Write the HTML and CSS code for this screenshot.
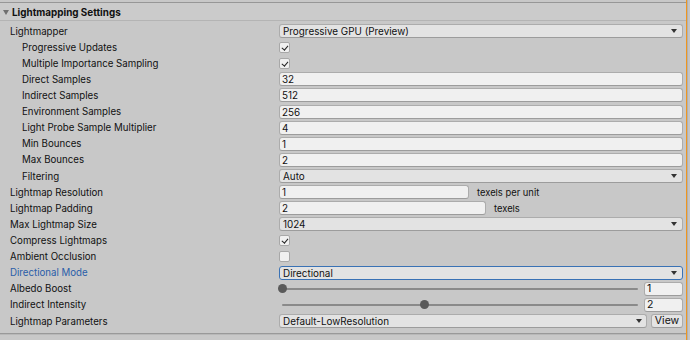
FILE: index.html
```html
<!DOCTYPE html>
<html lang="en">
<head>
    <meta charset="UTF-8">
    <title>Lightmapping Settings</title>
    <link rel="stylesheet" href="styles.css">
</head>
<body>
<div class="window">
    <div class="panel">
        <div class="topline"></div>
        <div class="header">
            <span class="foldout"></span>
            <span class="header-title">Lightmapping Settings</span>
        </div>

        <div class="row">
            <div class="label">Lightmapper</div>
            <div class="value"><div class="dropdown">Progressive GPU (Preview)<span class="arrow"></span></div></div>
        </div>
        <div class="row">
            <div class="label sub">Progressive Updates</div>
            <div class="value"><span class="check on"></span></div>
        </div>
        <div class="row">
            <div class="label sub">Multiple Importance Sampling</div>
            <div class="value"><span class="check on"></span></div>
        </div>
        <div class="row">
            <div class="label sub">Direct Samples</div>
            <div class="value"><div class="field">32</div></div>
        </div>
        <div class="row">
            <div class="label sub">Indirect Samples</div>
            <div class="value"><div class="field">512</div></div>
        </div>
        <div class="row">
            <div class="label sub">Environment Samples</div>
            <div class="value"><div class="field">256</div></div>
        </div>
        <div class="row">
            <div class="label sub">Light Probe Sample Multiplier</div>
            <div class="value"><div class="field">4</div></div>
        </div>
        <div class="row">
            <div class="label sub">Min Bounces</div>
            <div class="value"><div class="field">1</div></div>
        </div>
        <div class="row">
            <div class="label sub">Max Bounces</div>
            <div class="value"><div class="field">2</div></div>
        </div>
        <div class="row">
            <div class="label sub">Filtering</div>
            <div class="value"><div class="dropdown">Auto<span class="arrow"></span></div></div>
        </div>
        <div class="row">
            <div class="label">Lightmap Resolution</div>
            <div class="value">
                <div class="field res">1</div>
                <span class="unit">texels per unit</span>
            </div>
        </div>
        <div class="row">
            <div class="label">Lightmap Padding</div>
            <div class="value">
                <div class="field pad">2</div>
                <span class="unit">texels</span>
            </div>
        </div>
        <div class="row">
            <div class="label">Max Lightmap Size</div>
            <div class="value"><div class="dropdown">1024<span class="arrow"></span></div></div>
        </div>
        <div class="row">
            <div class="label">Compress Lightmaps</div>
            <div class="value"><span class="check on"></span></div>
        </div>
        <div class="row">
            <div class="label">Ambient Occlusion</div>
            <div class="value"><span class="check"></span></div>
        </div>
        <div class="row">
            <div class="label focused">Directional Mode</div>
            <div class="value"><div class="dropdown focus">Directional<span class="arrow"></span></div></div>
        </div>
        <div class="row">
            <div class="label">Albedo Boost</div>
            <div class="value">
                <div class="slider"><div class="knob" style="left: 0%"></div></div>
                <div class="field num">1</div>
            </div>
        </div>
        <div class="row">
            <div class="label">Indirect Intensity</div>
            <div class="value">
                <div class="slider"><div class="knob" style="left: 40%"></div></div>
                <div class="field num">2</div>
            </div>
        </div>
        <div class="row">
            <div class="label">Lightmap Parameters</div>
            <div class="value">
                <div class="dropdown params">Default-LowResolution<span class="arrow"></span></div>
                <div class="button">View</div>
            </div>
        </div>

        <div class="section-line"></div>
        <div class="header next">
            <span class="header-title">Workflow Settings</span>
        </div>
    </div>
    <div class="edge"></div>
</div>
</body>
</html>
```

FILE: styles.css
```css
body {
    margin: 0;
    background-color: #c8c8c8;
    font-family: Inter, "Noto Sans", sans-serif;
    font-size: 9.7px;
    color: #111;
    overflow: hidden;
}
.window {
    display: flex;
    width: 690px;
    height: 340px;
    overflow: hidden;
}
.panel {
    width: 686px;
    border-right: 1px solid #f0961e;
    flex-shrink: 0;
}
.edge {
    flex: 1;
    background-color: #c4c4c4;
    border-left: 1px solid #b0b0b0;
}
.topline {
    height: 2px;
    border-bottom: 1px solid #979797;
}
.header {
    display: flex;
    align-items: center;
    height: 17px;
    border-bottom: 1px solid #b4b4b4;
    background-color: #cbcbcb;
    margin-bottom: 2px;
}
.header-title {
    font-weight: 700;
    font-size: 9.9px;
    padding-left: 2px;
}
.foldout {
    width: 0;
    height: 0;
    margin-left: 3px;
    margin-right: 1px;
    margin-top: 2px;
    border-left: 3.5px solid transparent;
    border-right: 3.5px solid transparent;
    border-top: 5px solid #707070;
}
.row {
    display: flex;
    align-items: center;
    height: 16.12px;
}
.label {
    width: 269px;
    padding-left: 10px;
    white-space: nowrap;
}
.label.sub {
    width: 257px;
    padding-left: 22px;
}
.label.focused {
    color: #2a5ea8;
}
.value {
    flex: 1;
    display: flex;
    align-items: center;
    padding-right: 3px;
    min-width: 0;
}
.field, .dropdown, .button {
    box-sizing: border-box;
    height: 14px;
    line-height: 12px;
    padding: 0 3px;
    border: 1px solid #acacac;
    border-bottom-color: #9c9c9c;
    border-radius: 3px;
    background-color: #f0f0f0;
    white-space: nowrap;
    font-size: 9.9px;
}
.field {
    flex: 1;
    padding-left: 2px;
}
.dropdown {
    flex: 1;
    position: relative;
    background-color: #e3e3e3;
    padding-left: 3px;
}
.dropdown.focus {
    border-color: #3a72b5;
}
.arrow {
    position: absolute;
    right: 5px;
    top: 4px;
    width: 0;
    height: 0;
    border-left: 3.5px solid transparent;
    border-right: 3.5px solid transparent;
    border-top: 4px solid #333;
}
.field.res {
    flex: 0 0 190px;
}
.field.pad {
    flex: 0 0 207px;
}
.unit {
    margin-left: 8px;
    white-space: nowrap;
    font-size: 9.4px;
}
.check {
    box-sizing: border-box;
    width: 11px;
    height: 11px;
    border: 1px solid #a8a8a8;
    border-radius: 2px;
    background-color: #f0f0f0;
    position: relative;
}
.check.on::after {
    content: "";
    position: absolute;
    left: 2.5px;
    top: 1px;
    width: 2.5px;
    height: 5px;
    border-right: 1.3px solid #222;
    border-bottom: 1.3px solid #222;
    transform: rotate(40deg);
}
.slider {
    flex: 1;
    position: relative;
    height: 2px;
    margin-left: 3px;
    margin-right: 6px;
    background-color: #8a8a8a;
    border-radius: 1px;
}
.knob {
    position: absolute;
    top: -4px;
    width: 9px;
    height: 9px;
    margin-left: -4px;
    border-radius: 50%;
    background-color: #5a5a5a;
}
.field.num {
    flex: 0 0 39px;
    font-size: 10.5px;
}
.dropdown.params {
    margin-right: 4px;
}
.dropdown.params .arrow {
    right: 4px;
}
.button {
    flex: 0 0 32px;
    text-align: center;
    font-size: 10.5px;
    background-color: #e4e4e4;
    padding: 0;
}
.section-line {
    height: 1px;
    margin-top: 4px;
    background-color: #999;
    border-bottom: 1px solid #b8b8b8;
}
.header.next {
    border-bottom: none;
    background-color: transparent;
    height: 14px;
    align-items: flex-end;
}
.header.next .header-title {
    padding-left: 10px;
    line-height: 8px;
    overflow: hidden;
}
```
